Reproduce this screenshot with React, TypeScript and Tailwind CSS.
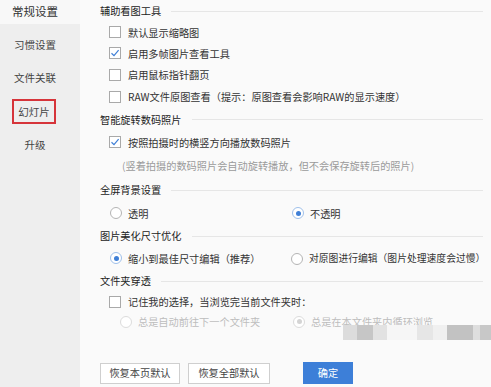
// Slideshow settings panel: grey tab rail on the left, option groups on the right.
import type { ReactNode } from 'react';

const font = { fontFamily: '"Noto Sans CJK SC", "Noto Sans", sans-serif' };

function Check({ on, label }: { on?: boolean; label: string }) {
  return (
    <label className="flex items-center gap-[7px] whitespace-nowrap pl-[9px] text-[#333]">
      <span className="flex h-[12px] w-[12px] items-center justify-center border border-[#a9a9a9] bg-white">
        {on && (
          <svg width="10" height="10" viewBox="0 0 10 10" fill="none">
            <path d="M1.5 5.2 L4 7.6 L8.6 2.2" stroke="#3f7fd6" strokeWidth="1.2" />
          </svg>
        )}
      </span>
      {label}
    </label>
  );
}

function Radio({ on, off, label }: { on?: boolean; off?: boolean; label: string }) {
  return (
    <span className={off ? 'flex items-center gap-[6px] whitespace-nowrap text-[#bdbdbd]' : 'flex items-center gap-[6px] whitespace-nowrap text-[#333]'}>
      <span
        className={
          off
            ? 'flex h-[12px] w-[12px] shrink-0 items-center justify-center rounded-full border border-[#dcdcdc] bg-white'
            : on
              ? 'flex h-[12px] w-[12px] shrink-0 items-center justify-center rounded-full border border-[#9fc0ea] bg-white'
              : 'flex h-[12px] w-[12px] shrink-0 items-center justify-center rounded-full border border-[#b4b4b4] bg-white'
        }
      >
        {on && <span className={off ? 'h-[5px] w-[5px] rounded-full bg-[#d4d4d4]' : 'h-[5px] w-[5px] rounded-full bg-[#3f7fd6]'} />}
      </span>
      {label}
    </span>
  );
}

function Head({ children, h }: { children: ReactNode; h: string }) {
  return (
    <div className={`flex items-center gap-[10px] pr-[8px] text-[#222] ${h}`}>
      <span>{children}</span>
      <span className="h-px flex-1 bg-[#e6e6e6]" />
    </div>
  );
}

export default function App() {
  return (
    <div className="relative flex h-[387px] w-[491px] overflow-hidden bg-[#fafafa] text-[10.2px]" style={font}>
      {/* tab rail */}
      <div className="flex w-[80px] shrink-0 flex-col bg-[#eeeeee]">
        <div className="flex h-[24px] items-center bg-[#f8f8f8] pl-[12px] text-[11.5px] text-[#333]">常规设置</div>
        <div className="mt-[4px] flex h-[33px] items-center justify-center pr-[10px] text-[10.5px] text-[#444]">习惯设置</div>
        <div className="flex h-[33px] items-center justify-center pr-[10px] text-[10.5px] text-[#444]">文件关联</div>
        <div className="mt-[5px] ml-[12px] flex h-[25px] w-[44px] items-center justify-center border-2 border-[#d6343a] text-[10.5px] text-[#444]">
          幻灯片
        </div>
        <div className="flex h-[42px] items-center justify-center pr-[10px] text-[10.5px] text-[#444]">升级</div>
      </div>

      {/* settings */}
      <div className="flex min-w-0 flex-1 flex-col pl-[20px]">
        <Head h="h-[22px]">辅助看图工具</Head>
        <div className="flex h-[21px] items-center"><Check label="默认显示缩略图" /></div>
        <div className="flex h-[21px] items-center"><Check on label="启用多帧图片查看工具" /></div>
        <div className="flex h-[22px] items-center"><Check label="启用鼠标指针翻页" /></div>
        <div className="flex h-[22px] items-center"><Check label="RAW文件原图查看（提示：原图查看会影响RAW的显示速度）" /></div>

        <Head h="h-[23px]">智能旋转数码照片</Head>
        <div className="flex h-[23px] items-center"><Check on label="按照拍摄时的横竖方向播放数码照片" /></div>
        <div className="flex h-[24px] items-center whitespace-nowrap pl-[22px] text-[#9a9a9a]">(竖着拍摄的数码照片会自动旋转播放，但不会保存旋转后的照片)</div>

        <Head h="h-[24px]">全屏背景设置</Head>
        <div className="flex h-[23px] items-center pl-[10px]">
          <div className="w-[182px] shrink-0"><Radio label="透明" /></div>
          <Radio on label="不透明" />
        </div>

        <Head h="h-[22px]">图片美化尺寸优化</Head>
        <div className="flex h-[23px] items-center pl-[10px]">
          <div className="w-[181px] shrink-0"><Radio on label="缩小到最佳尺寸编辑（推荐）" /></div>
          <div className="text-[9.8px]"><Radio label="对原图进行编辑（图片处理速度会过慢）" /></div>
        </div>

        <Head h="h-[22px]">文件夹穿透</Head>
        <div className="flex h-[20px] items-center"><Check label="记住我的选择，当浏览完当前文件夹时：" /></div>
        <div className="flex h-[20px] items-center pl-[20px]">
          <div className="w-[173px] shrink-0"><Radio off label="总是自动前往下一个文件夹" /></div>
          <Radio off on label="总是在本文件夹内循环浏览" />
        </div>

        <div className="mt-[30px] flex items-center">
          <button className="h-[21px] w-[80px] border border-[#cfcfcf] bg-white text-[#444]" style={font}>恢复本页默认</button>
          <button className="ml-[8px] h-[21px] w-[82px] border border-[#cfcfcf] bg-white text-[#444]" style={font}>恢复全部默认</button>
          <button className="ml-[33px] h-[22px] w-[50px] bg-[#3d7fd8] text-white" style={font}>确定</button>
        </div>
      </div>

      {/* pixelated watermark */}
      <div className="absolute left-[343px] top-[325px] flex h-[15px]">
        <span className="w-[14px] bg-[#dcdcdc]" />
        <span className="w-[16px] bg-[#c6c6c6]" />
        <span className="w-[14px] bg-[#e2e2e2]" />
        <span className="w-[30px] bg-[#f6f6f6]" />
        <span className="w-[16px] bg-[#e6e6e6]" />
        <span className="w-[14px] bg-[#f0f0f0]" />
        <span className="w-[26px] bg-[#c2c2c2]" />
        <span className="w-[7px] bg-[#dedede]" />
        <span className="w-[11px] bg-[#c8c8c8]" />
      </div>
    </div>
  );
}
